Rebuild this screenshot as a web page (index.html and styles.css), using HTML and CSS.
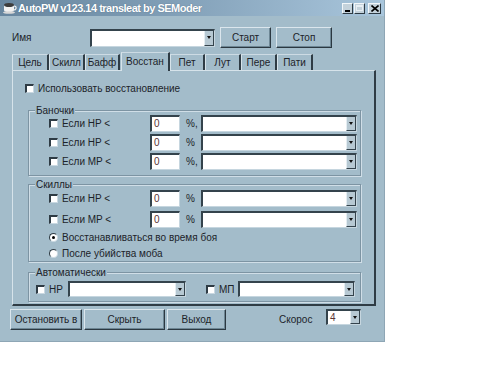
FILE: index.html
```html
<!DOCTYPE html>
<html>
<head>
<meta charset="utf-8">
<link rel="stylesheet" href="styles.css">
</head>
<body>
<div class="window">
  <div class="titlebar">
    <svg class="app-icon" width="14" height="12" viewBox="0 0 14 12">
      <ellipse cx="6" cy="3" rx="5" ry="2" fill="#3d3d3d"/>
      <path d="M1 3 L1 8 Q1 10 6 10 Q11 10 11 8 L11 3 Q11 5 6 5 Q1 5 1 3 Z" fill="#f2f2f2"/>
      <path d="M11 4 Q13.5 4 13 6.5 Q12.5 8 11 8" fill="none" stroke="#f2f2f2" stroke-width="1.2"/>
      <ellipse cx="6" cy="10.5" rx="6" ry="1.3" fill="#d8d8d8"/>
    </svg>
    <span class="title">AutoPW v123.14 transleat by SEModer</span>
    <div class="tb-btns">
      <span class="tb-btn"><span class="g-min"></span></span>
      <span class="tb-btn"><span class="g-max"></span></span>
      <span class="tb-btn close"><svg width="8" height="7" viewBox="0 0 8 7"><path d="M0.5 0.5 L7.5 6.5 M7.5 0.5 L0.5 6.5" stroke="#000" stroke-width="1.6"/></svg></span>
    </div>
  </div>

  <div class="toprow">
    <span class="lbl-name">Имя</span>
    <div class="combo c-name"><div class="field"></div><div class="arrow"><span class="tri"></span></div></div>
    <div class="btn b-start">Старт</div>
    <div class="btn b-stop">Стоп</div>
  </div>

  <div class="tabs">
    <div class="tab w37">Цель</div>
    <div class="tab w36">Скилл</div>
    <div class="tab w35">Бафф</div>
    <div class="tab active">Восстан</div>
    <div class="tab w35">Пет</div>
    <div class="tab w36">Лут</div>
    <div class="tab w36">Пере</div>
    <div class="tab w36">Пати</div>
  </div>

  <div class="panel">
    <div class="chk-row main"><span class="chk"></span><span>Использовать восстановление</span></div>

    <div class="group g-ban">
      <span class="legend">Баночки</span>
      <div class="rows r-ban">
        <div class="row"><span class="chk"></span><span class="rlabel">Если HP &lt;</span><div class="num">0</div><span class="pct">%,</span><div class="combo c-wide"><div class="field"></div><div class="arrow"><span class="tri"></span></div></div></div>
        <div class="row"><span class="chk"></span><span class="rlabel">Если HP &lt;</span><div class="num">0</div><span class="pct">%</span><div class="combo c-wide"><div class="field"></div><div class="arrow"><span class="tri"></span></div></div></div>
        <div class="row"><span class="chk"></span><span class="rlabel">Если MP &lt;</span><div class="num">0</div><span class="pct">%,</span><div class="combo c-wide"><div class="field"></div><div class="arrow"><span class="tri"></span></div></div></div>
      </div>
    </div>

    <div class="group g-sk">
      <span class="legend">Скиллы</span>
      <div class="rows r-sk">
        <div class="row"><span class="chk"></span><span class="rlabel">Если HP &lt;</span><div class="num">0</div><span class="pct">%</span><div class="combo c-wide"><div class="field"></div><div class="arrow"><span class="tri"></span></div></div></div>
        <div class="row"><span class="chk"></span><span class="rlabel">Если MP &lt;</span><div class="num">0</div><span class="pct">%</span><div class="combo c-wide"><div class="field"></div><div class="arrow"><span class="tri"></span></div></div></div>
      </div>
      <div class="radios">
        <div class="radio-row"><span class="radio on"></span><span>Восстанавливаться во время боя</span></div>
        <div class="radio-row"><span class="radio"></span><span>После убийства моба</span></div>
      </div>
    </div>

    <div class="group g-auto">
      <span class="legend">Автоматически</span>
      <div class="auto-row">
        <span class="chk"></span><span class="alabel">HP</span>
        <div class="combo c-hp"><div class="field"></div><div class="arrow"><span class="tri"></span></div></div>
        <span class="chk chk-mp"></span><span class="alabel">МП</span>
        <div class="combo c-mp"><div class="field"></div><div class="arrow"><span class="tri"></span></div></div>
      </div>
    </div>
  </div>

  <div class="bottom">
    <div class="btn b-stopin">Остановить в</div>
    <div class="btn b-hide">Скрыть</div>
    <div class="btn b-exit">Выход</div>
    <span class="speed">Скорос</span>
    <div class="combo c-speed"><div class="field">4</div><div class="arrow"><span class="tri"></span></div></div>
  </div>
</div>
</body>
</html>
```

FILE: styles.css
```css
* { box-sizing: border-box; }
body {
  margin: 0;
  background: #ffffff;
  font-family: "Liberation Sans", Arial, sans-serif;
  font-size: 10px;
  color: #1c2329;
}
.window {
  width: 385px;
  height: 342px;
  background: #a3bcca;
  display: flex;
  flex-direction: column;
  border-right: 1px solid #8ea6b5;
  border-bottom: 1px solid #8ea6b5;
}

/* title bar */
.titlebar {
  height: 16px;
  display: flex;
  align-items: center;
  padding: 0 3px 0 3px;
  background: linear-gradient(to right, #67869f 0%, #7e9cb4 40%, #a9c6dc 100%);
}
.app-icon { margin-right: 1px; flex: none; }
.title {
  flex: 1;
  color: #ffffff;
  font-weight: bold;
  font-size: 11px;
  letter-spacing: -0.5px;
  text-shadow: 0 0 1px #46617a;
}
.tb-btns { display: flex; gap: 1px; align-items: center; }
.tb-btn {
  width: 11px;
  height: 11px;
  background: #c4d2db;
  border: 1px solid;
  border-color: #f2f7fa #2e3b44 #2e3b44 #f2f7fa;
  display: flex;
  align-items: center;
  justify-content: center;
}
.tb-btn.close { width: 13px; margin-left: 2px; }
.g-min { width: 5px; height: 2px; background: #000; margin-top: 5px; margin-right: 1px; }
.g-max { width: 7px; height: 6px; border: 1px solid #e7eef3; border-top-width: 2px; }

/* top row */
.toprow {
  display: flex;
  align-items: center;
  height: 21px;
  margin-top: 11px;
  padding-left: 12px;
}
.lbl-name { width: 78px; }

.combo {
  display: flex;
  height: 17px;
  background: #ffffff;
  border-style: solid;
  border-width: 2px 1px 1px 2px;
  border-color: #34434c #c6d6df #c6d6df #34434c;
}
.combo .field {
  flex: 1;
  padding-left: 2px;
  line-height: 14px;
  color: #5a3434;
}
.combo .arrow {
  width: 10px;
  background: #b7c9d3;
  border-left: 1px solid #e4edf2;
  border-right: 1px solid #34434c;
  border-bottom: 1px solid #34434c;
  display: flex;
  align-items: center;
  justify-content: center;
}
.tri {
  width: 0;
  height: 0;
  border-left: 2px solid transparent;
  border-right: 2px solid transparent;
  border-top: 3px solid #111;
}
.c-name { width: 125px; height: 18px; }

.btn {
  display: flex;
  align-items: center;
  justify-content: center;
  height: 21px;
  background: #a3bcca;
  border: 1px solid;
  border-color: #dbe6ed #2b3841 #2b3841 #dbe6ed;
  box-shadow: inset -1px -1px 0 #6d8694;
}
.b-start { width: 51px; margin-left: 5px; }
.b-stop { width: 56px; margin-left: 5px; }

/* tabs */
.tabs {
  display: flex;
  align-items: flex-end;
  height: 18px;
  margin-top: 4px;
  padding-left: 12px;
}
.tab {
  height: 16px;
  display: flex;
  align-items: center;
  justify-content: center;
  border-top: 1px solid #cddbe4;
  border-left: 1px solid #d6e3ea;
  border-right: 2px solid #2f3c45;
}
.w35 { width: 35px; }
.w36 { width: 36px; }
.w37 { width: 37px; }
.tab.active {
  width: 49px;
  height: 19px;
  margin-left: 1px;
  margin-bottom: -1px;
  background: #a3bcca;
  position: relative;
  z-index: 1;
  padding-bottom: 2px;
}

/* panel */
.panel {
  width: 364px;
  height: 236px;
  margin-left: 12px;
  border-top: 1px solid #d6e3ea;
  border-left: 1px solid #d6e3ea;
  border-right: 2px solid #2f3c45;
  border-bottom: 2px solid #2f3c45;
  display: flex;
  flex-direction: column;
}
.chk {
  width: 9px;
  height: 9px;
  flex: none;
  background: #ffffff;
  border-style: solid;
  border-width: 2px 1px 1px 2px;
  border-color: #2e3b44 #c9d8e1 #c9d8e1 #2e3b44;
}
.chk-row.main {
  display: flex;
  align-items: center;
  gap: 4px;
  height: 13px;
  margin-top: 11px;
  padding-left: 12px;
}

.group {
  width: 333px;
  margin-left: 15px;
  border: 1px solid #7d94a3;
  box-shadow: inset 1px 1px 0 #d0dee7, 1px 1px 0 #d0dee7;
  display: flex;
  flex-direction: column;
}
.legend {
  align-self: flex-start;
  height: 13px;
  line-height: 13px;
  margin: -7px 0 -2px 6px;
  padding: 0 1px;
  background: #a3bcca;
}
.g-ban { margin-top: 15px; padding-bottom: 5px; }
.g-sk { margin-top: 8px; padding-bottom: 1px; }
.g-auto { margin-top: 10px; padding-bottom: 4px; }

.rows { display: flex; flex-direction: column; }
.r-ban { gap: 2px; }
.r-sk { gap: 4px; margin-top: 1px; }
.row {
  display: flex;
  align-items: center;
  height: 17px;
  padding-left: 20px;
}
.rlabel { width: 92px; padding-left: 4px; }
.num {
  width: 30px;
  height: 17px;
  background: #ffffff;
  border-style: solid;
  border-width: 2px 1px 1px 2px;
  border-color: #34434c #c6d6df #c6d6df #34434c;
  padding-left: 2px;
  line-height: 14px;
  color: #5a3434;
}
.pct { width: 21px; padding-left: 6px; }
.c-wide { width: 156px; }

.radios { display: flex; flex-direction: column; gap: 2px; margin-top: 2px; }
.radio-row {
  display: flex;
  align-items: center;
  height: 14px;
  padding-left: 20px;
  gap: 4px;
}
.radio {
  width: 9px;
  height: 9px;
  border-radius: 50%;
  background: #ffffff;
  border-style: solid;
  border-width: 1px;
  border-color: #2e3b44 #c9d8e1 #c9d8e1 #2e3b44;
  display: flex;
  align-items: center;
  justify-content: center;
}
.radio.on::after {
  content: "";
  width: 3px;
  height: 3px;
  border-radius: 50%;
  background: #000;
}

.auto-row {
  display: flex;
  align-items: center;
  height: 16px;
  margin-top: 4px;
  padding-left: 7px;
}
.alabel { padding-left: 4px; width: 23px; }
.c-hp { width: 118px; height: 16px; }
.chk-mp { margin-left: 20px; }
.c-mp { width: 117px; height: 16px; }

/* bottom */
.bottom {
  display: flex;
  align-items: flex-start;
  margin-top: 3px;
  padding-left: 10px;
}
.b-stopin { width: 72px; }
.b-hide { width: 81px; margin-left: 2px; }
.b-exit { width: 59px; margin-left: 2px; }
.speed { width: 47px; margin-left: 53px; line-height: 21px; }
.c-speed { width: 35px; height: 16px; }
```
